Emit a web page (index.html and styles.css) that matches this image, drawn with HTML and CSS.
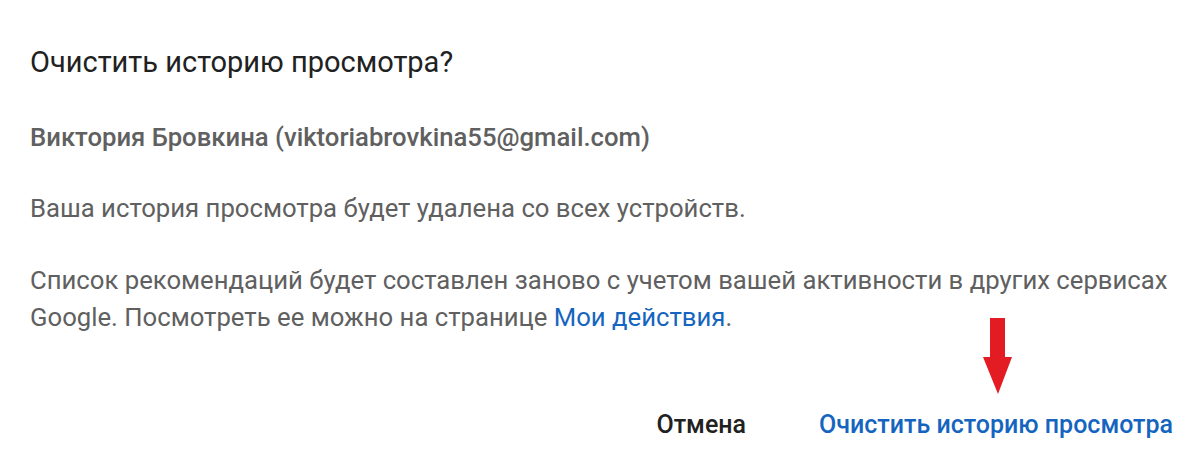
FILE: index.html
```html
<!DOCTYPE html>
<html lang="ru">
<head>
<meta charset="utf-8">
<link rel="stylesheet" href="styles.css">
</head>
<body>
<div class="dialog">
  <h1 class="title">Очистить историю просмотра?</h1>
  <p class="account">Виктория Бровкина (viktoriabrovkina55@gmail.com)</p>
  <p class="text">Ваша история просмотра будет удалена со всех устройств.</p>
  <p class="text">Список рекомендаций будет составлен заново с учетом вашей активности в других сервисах Google. Посмотреть ее можно на странице <a class="link" href="#">Мои действия</a>.</p>
  <div class="actions">
    <button class="btn btn-cancel">Отмена</button>
    <button class="btn btn-confirm">Очистить историю просмотра<svg class="arrow" width="30" height="77" viewBox="0 0 30 77"><path d="M7 0 H22 V39 H29 L15 76 L0 39 H7 Z" fill="#e31b23"/></svg></button>
  </div>
</div>
</body>
</html>
```
FILE: styles.css
```css
* { box-sizing: border-box; }
html, body { margin: 0; background: #fff; }
body { font-family: Roboto, "Noto Sans", sans-serif; }
.dialog { width: 1200px; height: 465px; padding: 44px 27px 0 30px; }
.title { margin: 0; font-size: 29px; font-weight: 400; color: #212121; line-height: 36px; }
.account { margin: 39px 0 0; font-size: 25.7px; font-weight: 500; color: #606060; line-height: 36px; }
.text { margin: 35px 0 0; font-size: 25.7px; font-weight: 400; color: #606060; line-height: 37px; }
.link { color: #1565c0; text-decoration: none; }
.actions { display: flex; justify-content: flex-end; gap: 73px; margin-top: 71px; }
.btn { background: none; border: 0; padding: 0; font-family: inherit; font-size: 25px; font-weight: 500; line-height: 36px; cursor: pointer; }
.btn-cancel { color: #212121; }
.btn-confirm { color: #1565c0; position: relative; }
.arrow { position: absolute; left: 164px; top: -89px; }
```
